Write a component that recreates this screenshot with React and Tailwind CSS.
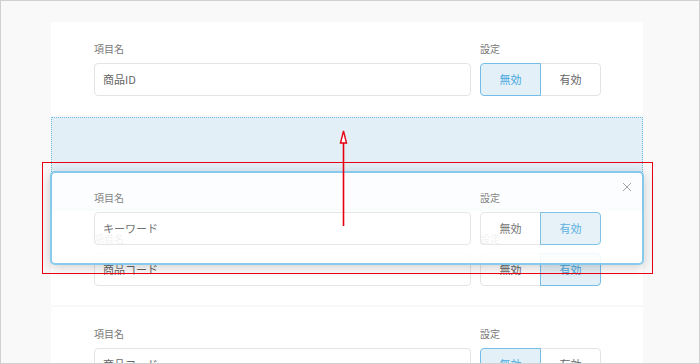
import React from "react";

const FONT = { fontFamily: '"Noto Sans CJK JP", "Noto Sans", sans-serif' };

function Toggle({ active }) {
  const base = "relative w-[61px] h-[33px] flex items-center justify-center text-[11px] border";
  const on = "bg-[#e4f0f8] border-[#74bde6] text-[#4aa9de] z-[1]";
  const off = "bg-white border-[#e4e4e4] text-[#666]";
  return (
    <div className="flex isolate">
      <div className={`${base} rounded-l-[4px] ${active === 0 ? on : off}`}>無効</div>
      <div className={`${base} rounded-r-[4px] -ml-px ${active === 1 ? on : off}`}>有効</div>
    </div>
  );
}

function RowContent({ value, active }) {
  return (
    <div className="flex gap-[9px]">
      <div className="w-[377px]">
        <div className="text-[10px] leading-[14px] text-[#777] mb-[7px]">項目名</div>
        <div className="h-[33px] border border-[#e4e4e4] rounded-[4px] flex items-center pl-[8px] text-[11px] text-[#666] bg-white">
          {value}
        </div>
      </div>
      <div>
        <div className="text-[10px] leading-[14px] text-[#777] mb-[7px]">設定</div>
        <Toggle active={active} />
      </div>
    </div>
  );
}

function Card({ value, active }) {
  return (
    <div className="h-[93px] bg-white pt-[20px] pl-[43px] shrink-0">
      <RowContent value={value} active={active} />
    </div>
  );
}

export default function App() {
  return (
    <div
      style={FONT}
      className="w-[700px] h-[364px] border border-[#d0d0d0] bg-[#f9f9f9] relative overflow-hidden"
    >
      <div className="pt-[21px] pl-[50px] w-[642px] flex flex-col gap-[2px]">
        <Card value="商品ID" active={0} />
        <div className="h-[93px] border border-dotted border-[#6fb9e3] bg-[#e3eff6] shrink-0" />
        <Card value="商品コード" active={1} />
        <Card value="商品コード" active={0} />
      </div>

      {/* dragged card */}
      <div className="absolute z-20 left-[49px] top-[170px] w-[594px] h-[94px] border-2 border-[#7cc5eb] rounded-[5px] bg-white opacity-[0.9] shadow-[0_3px_12px_rgba(0,0,0,0.2)] pt-[18px] pl-[42px]">
        <RowContent value="キーワード" active={1} />
        <svg className="absolute top-[9px] right-[10px]" width="10" height="10" viewBox="0 0 10 10">
          <path d="M1 1L9 9M9 1L1 9" stroke="#9a9a9a" strokeWidth="1" />
        </svg>
      </div>

      {/* red selection rectangle */}
      <div className="absolute z-30 left-[41px] top-[161px] w-[611px] h-[112px] border border-[#e60012]" />

      {/* red arrow */}
      <svg className="absolute z-40 left-[-1px] top-[-1px] pointer-events-none" width="700" height="364" viewBox="0 0 700 364">
        <line x1="343.5" y1="226" x2="343.5" y2="143" stroke="#e60012" strokeWidth="1.6" />
        <polygon points="343.5,131 340.5,143 346.5,143" fill="#fff" stroke="#e60012" strokeWidth="1.4" strokeLinejoin="miter" />
      </svg>
    </div>
  );
}
